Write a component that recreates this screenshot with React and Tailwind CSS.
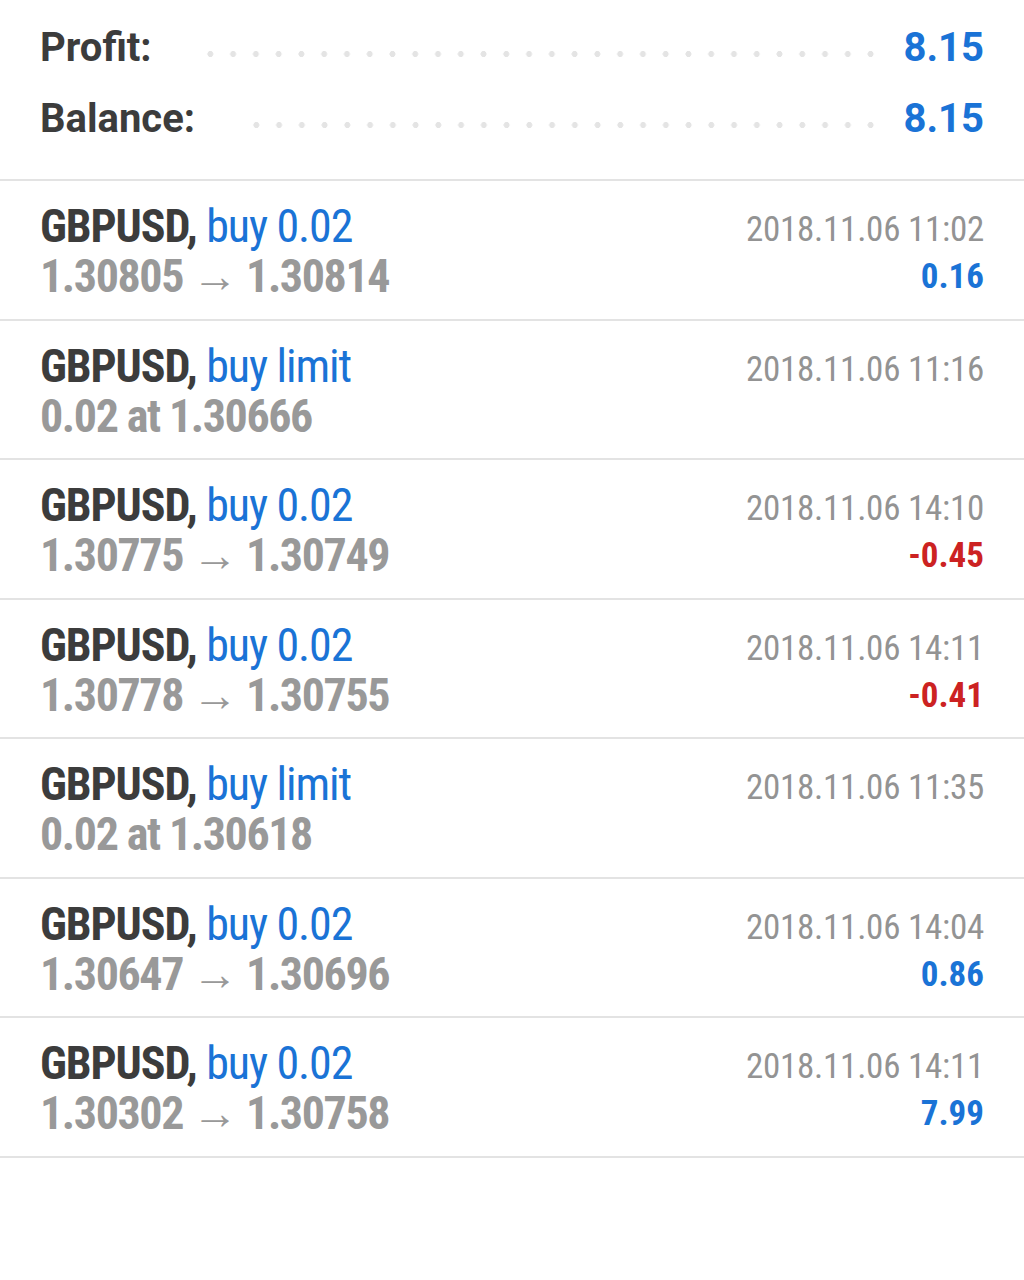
import React from 'react';

const summary = [
  { label: 'Profit:', value: '8.15', gap: 'ml-[47px]' },
  { label: 'Balance:', value: '8.15', gap: 'ml-[50px]' },
];

const trades = [
  { kind: 'buy 0.02', line: '1.30805 → 1.30814', date: '2018.11.06 11:02', profit: '0.16' },
  { kind: 'buy limit', line: '0.02 at 1.30666', date: '2018.11.06 11:16', profit: '' },
  { kind: 'buy 0.02', line: '1.30775 → 1.30749', date: '2018.11.06 14:10', profit: '-0.45' },
  { kind: 'buy 0.02', line: '1.30778 → 1.30755', date: '2018.11.06 14:11', profit: '-0.41' },
  { kind: 'buy limit', line: '0.02 at 1.30618', date: '2018.11.06 11:35', profit: '' },
  { kind: 'buy 0.02', line: '1.30647 → 1.30696', date: '2018.11.06 14:04', profit: '0.86' },
  { kind: 'buy 0.02', line: '1.30302 → 1.30758', date: '2018.11.06 14:11', profit: '7.99' },
];

const condensed = { fontFamily: '"Roboto Condensed", Roboto, sans-serif', fontStretch: 'condensed' };

const TradeRow = ({ trade }) => {
  const loss = trade.profit.startsWith('-');
  return (
    <div className="flex justify-between px-10 h-[139.5px] border-b-2 border-[#e3e3e3]" style={condensed}>
      <div className="flex flex-col pt-[20px]">
        <div className="text-[46px] leading-[50px] tracking-[-1.1px] whitespace-nowrap">
          <span className="font-bold text-[#3c3c3c]">GBPUSD,</span>{' '}
          <span className="text-[#1a73d6]">{trade.kind}</span>
        </div>
        <div className="text-[46px] leading-[50px] tracking-[-1.4px] font-bold text-[#999999] whitespace-nowrap">
          {trade.line}
        </div>
      </div>
      <div className="flex flex-col items-end pt-[26px]">
        <div className="text-[35px] leading-[46px] tracking-[-0.25px] text-[#939393] whitespace-nowrap">{trade.date}</div>
        <div className={`text-[35px] leading-[48px] font-bold ${loss ? 'text-[#cc2222]' : 'text-[#1a73d6]'}`}>
          {trade.profit}
        </div>
      </div>
    </div>
  );
};

export default function App() {
  return (
    <div className="w-[1024px] h-[1280px] bg-white" style={{ fontFamily: 'Roboto, sans-serif' }}>
      <div className="px-10 pt-[12px] pb-[25px] border-b-2 border-[#e3e3e3]">
        {summary.map((s) => (
          <div key={s.label} className="flex items-center h-[71px]">
            <span className="text-[40px] leading-[71px] font-bold text-[#3c3c3c]">{s.label}</span>
            <div
              className={`flex-1 ${s.gap} mr-[22px] mt-[13px] h-3 bg-[radial-gradient(circle,#e4e4e4_2.7px,transparent_3.3px)] bg-[length:22.7px_12px] bg-repeat-space bg-center`}
            />
            <span className="text-[40px] leading-[71px] font-bold text-[#1a73d6]">{s.value}</span>
          </div>
        ))}
      </div>
      {trades.map((t, i) => (
        <TradeRow key={i} trade={t} />
      ))}
    </div>
  );
}
